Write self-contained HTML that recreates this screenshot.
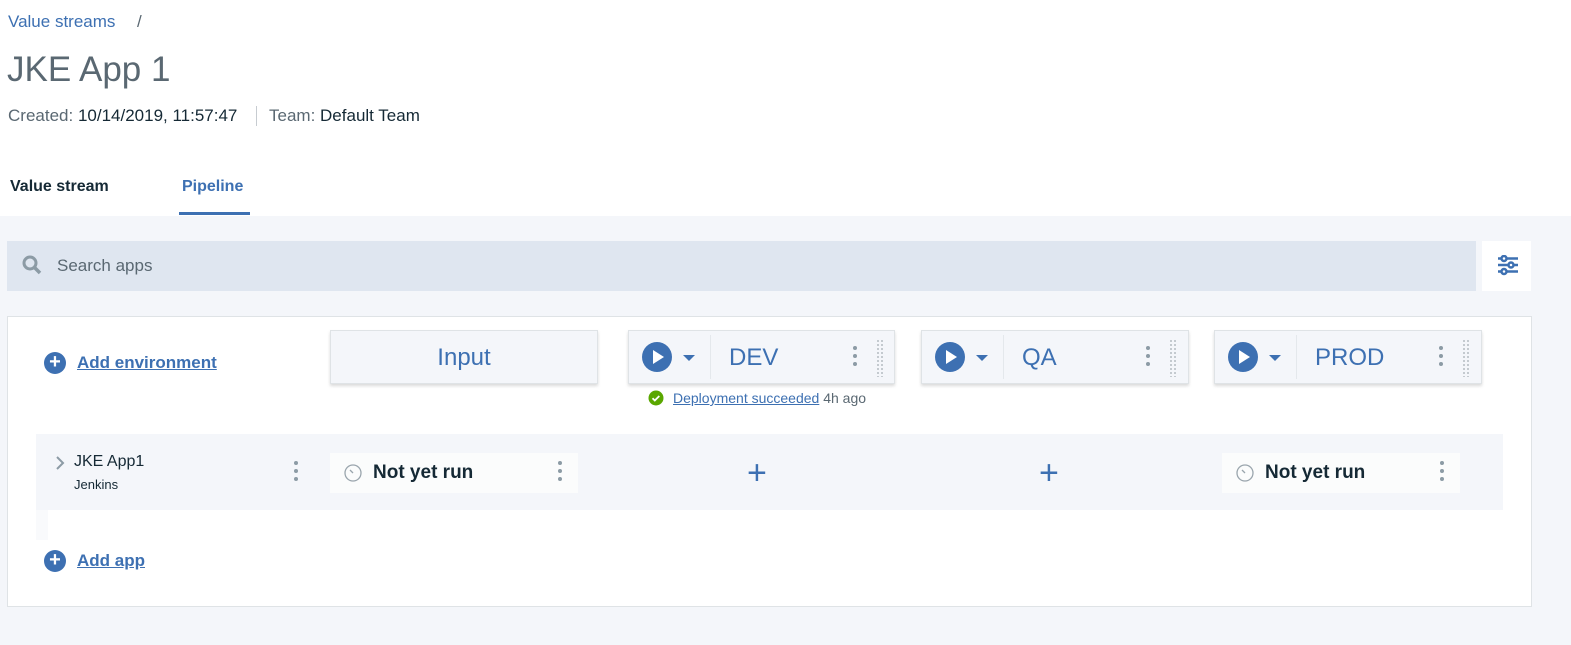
<!DOCTYPE html>
<html><head><style>
*{margin:0;padding:0;box-sizing:border-box}
body{width:1571px;height:645px;position:relative;background:#fff;font-family:"Liberation Sans",sans-serif;overflow:hidden}
.a{position:absolute}
.blue{color:#3d70b2}
.card{position:absolute;top:330px;height:54px;background:#f4f6fa;border:1px solid #dfe3e6;box-shadow:0 2px 3px rgba(0,0,0,.15)}
.play{position:absolute;left:13px;top:11px;width:30px;height:30px;border-radius:50%;background:#3d70b2}
.play:after{content:"";position:absolute;left:11px;top:8px;border-left:11px solid #fff;border-top:7px solid transparent;border-bottom:7px solid transparent}
.caret{position:absolute;left:54px;top:24px;border-top:6px solid #3d70b2;border-left:6px solid transparent;border-right:6px solid transparent}
.sep{position:absolute;left:81px;top:4px;width:1px;height:44px;background:#e4e8ec}
.ename{position:absolute;left:100px;top:13px;font-size:24px;color:#3d70b2}
.dots{position:absolute;width:4px}
.dots i{display:block;width:4px;height:4px;border-radius:50%;background:#8c9ba5;margin-bottom:4px}
.grip{position:absolute;top:8px;width:8px;height:38px;background-image:radial-gradient(circle,#c0c6cc 1px,transparent 1.2px);background-size:4px 4px}
.cell{position:absolute;top:453px;height:40px;background:#fbfcfc}
.clock{position:absolute;left:14px;top:11px}
.nyr{position:absolute;left:43px;top:9px;font-size:19px;font-weight:bold;color:#152935}
.plus{position:absolute;font-size:34px;color:#3d70b2;font-weight:normal}
.circ{position:absolute;width:22px;height:22px;border-radius:50%;background:#3d70b2;color:#fff;font-size:20px;line-height:21px;text-align:center;font-weight:bold}
</style></head><body>
<div class="a blue" style="left:8px;top:12px;font-size:17px">Value streams</div>
<div class="a" style="left:137px;top:12px;font-size:17px;color:#5a6872">/</div>
<div class="a" style="left:7px;top:50px;font-size:35px;color:#5a6872">JKE App 1</div>
<div class="a" style="left:8px;top:106px;font-size:17px;color:#5a6872">Created: <span style="color:#152935">10/14/2019, 11:57:47</span></div>
<div class="a" style="left:256px;top:106px;width:1px;height:20px;background:#c7ccd1"></div>
<div class="a" style="left:269px;top:106px;font-size:17px;color:#5a6872">Team: <span style="color:#152935">Default Team</span></div>
<div class="a" style="left:10px;top:178px;font-size:16px;font-weight:bold;color:#152935">Value stream</div>
<div class="a blue" style="left:182px;top:178px;font-size:16px;font-weight:bold">Pipeline</div>
<div class="a" style="left:179px;top:212px;width:71px;height:3px;background:#3d70b2"></div>
<div class="a" style="left:0;top:216px;width:1571px;height:429px;background:#f4f6fa"></div>
<div class="a" style="left:7px;top:241px;width:1469px;height:50px;background:#dfe6f0"></div>
<svg class="a" style="left:21px;top:254px" width="24" height="24"><circle cx="9" cy="9" r="6" fill="none" stroke="#8c9ba5" stroke-width="3"/><path d="M14 14l5 5" stroke="#8c9ba5" stroke-width="3.5"/></svg>
<div class="a" style="left:57px;top:256px;font-size:17px;color:#5a6872">Search apps</div>
<div class="a" style="left:1482px;top:241px;width:49px;height:50px;background:#fff"></div>
<svg class="a" style="left:1498px;top:255px" width="20" height="22"><g stroke="#3d70b2" stroke-width="2.5" fill="#fff"><path d="M0 3.5h20M0 10h20M0 16.5h20"/><circle cx="6" cy="3.5" r="2.5"/><circle cx="13" cy="10" r="2.5"/><circle cx="6" cy="16.5" r="2.5"/></g></svg>
<div class="a" style="left:7px;top:316px;width:1525px;height:291px;background:#fff;border:1px solid #dfe3e6"></div>
<div class="circ" style="left:44px;top:352px">+</div>
<div class="a blue" style="left:77px;top:353px;font-size:17px;font-weight:bold;text-decoration:underline">Add environment</div>
<div class="card" style="left:330px;width:268px"><div class="a" style="left:0;width:100%;top:13px;text-align:center;font-size:24px;color:#3d70b2">Input</div></div>
<div class="card" style="left:628px;width:267px"><div class="play"></div><div class="caret"></div><div class="sep"></div><div class="ename">DEV</div><div class="dots" style="left:224px;top:15px"><i></i><i></i><i></i></div><div class="grip" style="left:247px"></div></div>
<div class="card" style="left:921px;width:268px"><div class="play"></div><div class="caret"></div><div class="sep"></div><div class="ename">QA</div><div class="dots" style="left:224px;top:15px"><i></i><i></i><i></i></div><div class="grip" style="left:247px"></div></div>
<div class="card" style="left:1214px;width:268px"><div class="play"></div><div class="caret"></div><div class="sep"></div><div class="ename">PROD</div><div class="dots" style="left:224px;top:15px"><i></i><i></i><i></i></div><div class="grip" style="left:247px"></div></div>
<svg class="a" style="left:648px;top:390px" width="16" height="16"><circle cx="8" cy="8" r="7.5" fill="#5aa700"/><path d="M4.5 8.2l2.3 2.3 4.5-4.5" stroke="#fff" stroke-width="1.8" fill="none"/></svg>
<div class="a" style="left:673px;top:390px;font-size:14px;color:#5a6872"><span class="blue" style="text-decoration:underline">Deployment succeeded</span> 4h ago</div>
<div class="a" style="left:36px;top:434px;width:1467px;height:76px;background:#f4f6fa"></div>
<div class="a" style="left:36px;top:510px;width:12px;height:30px;background:#f9fafc"></div>
<svg class="a" style="left:55px;top:455px" width="10" height="16"><path d="M2 2l6 6-6 6" stroke="#8c9ba5" stroke-width="2" fill="none"/></svg>
<div class="a" style="left:74px;top:453px;font-size:16px;color:#152935">JKE App1</div>
<div class="a" style="left:74px;top:477px;font-size:13px;color:#152935">Jenkins</div>
<div class="dots" style="left:294px;top:461px"><i></i><i></i><i></i></div>
<div class="cell" style="left:330px;width:248px"><svg class="clock" width="18" height="18"><circle cx="9" cy="9" r="8" fill="none" stroke="#9aa5ad" stroke-width="1.3"/><path d="M9 9L6 6" stroke="#9aa5ad" stroke-width="1.3"/></svg><div class="nyr">Not yet run</div><div class="dots" style="left:228px;top:8px"><i></i><i></i><i></i></div></div>
<div class="plus" style="left:747px;top:454px">+</div>
<div class="plus" style="left:1039px;top:454px">+</div>
<div class="cell" style="left:1222px;width:238px"><svg class="clock" width="18" height="18"><circle cx="9" cy="9" r="8" fill="none" stroke="#9aa5ad" stroke-width="1.3"/><path d="M9 9L6 6" stroke="#9aa5ad" stroke-width="1.3"/></svg><div class="nyr">Not yet run</div><div class="dots" style="left:218px;top:8px"><i></i><i></i><i></i></div></div>
<div class="circ" style="left:44px;top:550px">+</div>
<div class="a blue" style="left:77px;top:551px;font-size:17px;font-weight:bold;text-decoration:underline">Add app</div>
</body></html>
